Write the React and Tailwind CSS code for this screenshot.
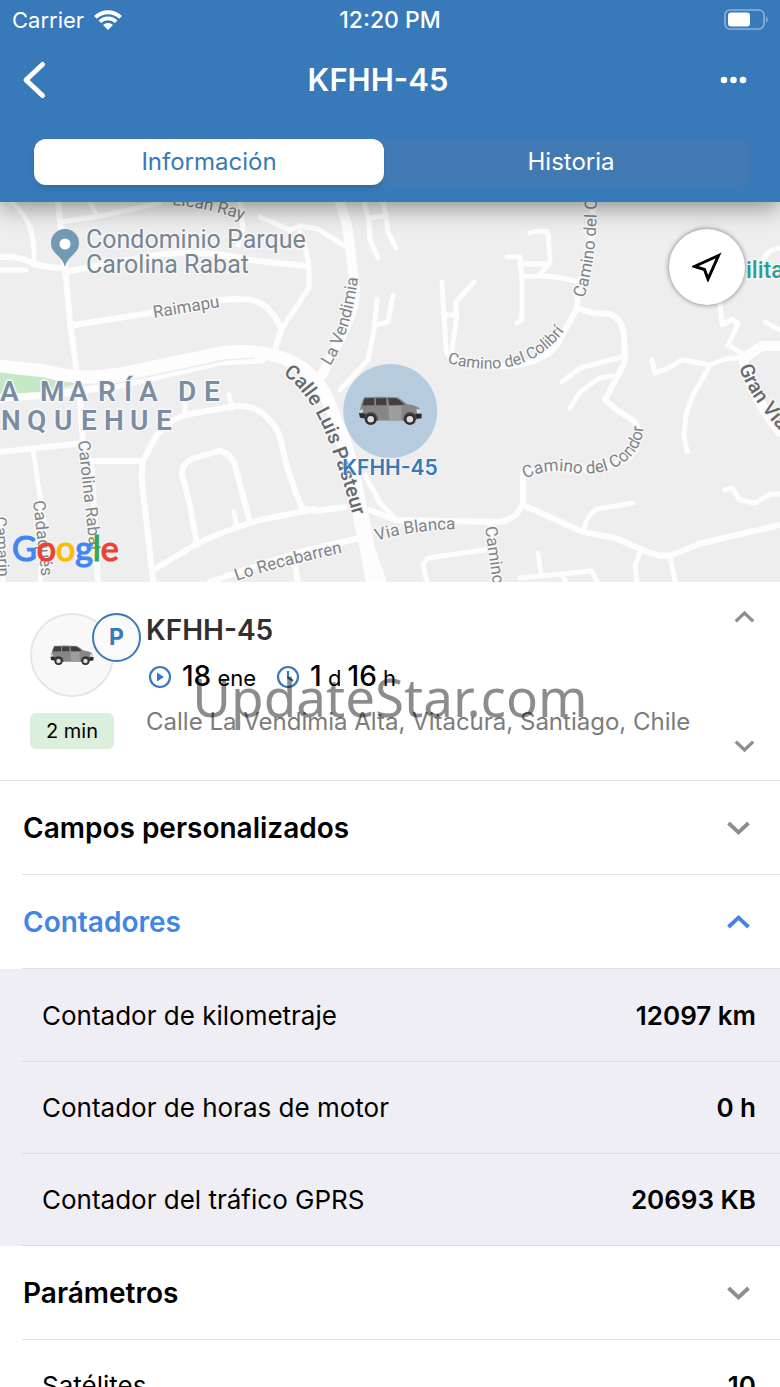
import React from "react";

function Car({ className }) {
  return (
    <svg viewBox="0 0 196 92" className={className} aria-hidden="true">
      <path d="M18 4 Q60 0 118 4 Q128 7 150 25 Q176 28 186 36 L192 54 L190 70 L148 75 L60 75 L8 66 L5 44 L10 22 Z" fill="#868686" />
      <path d="M92 31 H132 V75 H94 Z" fill="#9d9d9d" />
      <path d="M19 7 L49 7 V28 L13 29 Z" fill="#443e3e" />
      <path d="M54 7 H86 V28 H54 Z" fill="#443e3e" />
      <path d="M91 7 H116 Q126 11 141 27 L95 28 Z" fill="#443e3e" />
      <path d="M5 46 L12 38 L14 50 L6 52 Z" fill="#e4e0dc" />
      <path d="M2 52 L24 54 V70 L5 67 Z M170 56 L194 54 V68 L170 70 Z" fill="#2c2c30" />
      <path d="M178 40 L189 41 L191 53 L180 52 Z" fill="#e4e0dc" />
      <path d="M19 72 Q18 49 38 49 Q60 49 61 76 Z M138 76 Q138 49 158 49 Q178 49 178 72 Z" fill="#555" />
      <circle cx="38" cy="71" r="18" fill="#303033" />
      <circle cx="38" cy="71" r="10" fill="#e3dcd5" />
      <circle cx="158" cy="71" r="18" fill="#303033" />
      <circle cx="158" cy="71" r="10" fill="#e3dcd5" />
    </svg>
  );
}

function Chevron({ up = false, className }) {
  return (
    <svg viewBox="0 0 24 16" className={className} fill="none" stroke="currentColor" strokeWidth="3.8" aria-hidden="true">
      <path d={up ? "M2 13 L12 3.5 L22 13" : "M2 3 L12 12.5 L22 3"} />
    </svg>
  );
}

const minorRoads = [
  "M12 202 Q25 215 29 225 Q35 240 34 264",
  "M0 270 H26",
  "M160 203 L100 216 L60 222 M90 202 L97 216",
  "M260 217 L290 230 L300 226 L318 229 L343 245",
  "M240 202 L243 228 L238 245",
  "M300 232 Q308 255 309 268 V288 L281 330 L274 352",
  "M364 202 L369 222 L370 240 L378 258 M383 202 L386 216 L388 232 L396 248 M369 218 L386 216",
  "M377 300 L374 330 L368 360 L340 390 M393 295 L388 322 L375 325",
  "M442 282 L446 350 Q448 360 470 364 M446 315 H457 L452 350 M474 282 L456 302 V316",
  "M530 233 Q535 230 548 232 L550 262 L540 275 M520 264 H549 M507 257 H520 L522 280 V320 L517 323 M522 277 Q550 274 575 281",
  "M625 356 L580 368 L562 382 M612 376 L600 378 L580 392 L570 408",
  "M652 360 L655 373 L668 368 L682 360 L710 365 L725 359 L745 357 M710 365 L693 395 L686 415 L684 435 L687 452",
  "M720 303 L722 325 L732 319 L738 324 L728 345 L745 355 M765 322 L780 330",
  "M725 490 L732 488 L740 500 L755 503 L770 494 H780",
  "M583 531 Q588 513 597 509 L633 503",
  "M520 578 L592 571 L597 582 M538 553 L541 574 M562 574 L566 582",
  "M640 553 L635 565 L637 582 M670 556 L675 582",
  "M485 550 L455 554 L428 558 L423 564 L427 582",
  "M365 475 L380 503 L395 518",
  "M229 395 L232 408 M185 405 V414 M234 512 L237 528",
  "M33 450 L45 530 L40 582 M0 520 L3 582",
  "M780 248 Q768 250 764 258",
];

const localRoads = [
  "M0 257 Q18 255 34 264 Q48 268 65 268",
  "M58 202 L65 268 L70 322 L77 374",
  "M65 272 L150 256 Q200 248 250 260 L306 266",
  "M75 325 L150 313 L215 301 Q250 296 262 304 Q277 314 281 330 L274 352",
  "M0 452 L84 443 M80 400 L83 443 L92 470 L98 582",
  "M84 461 H143 Q140 475 144 500 L153 580",
  "M143 461 L155 438 Q165 422 185 415 L235 406 Q252 405 262 413 Q277 425 281 440 Q286 470 302 508 L315 511 L345 507",
  "M315 509 L260 520 Q220 532 195 545 L153 570",
  "M197 545 L190 505 L182 475 Q181 464 192 459 L218 451 Q231 452 235 466 L250 522",
  "M210 582 L250 568 L300 552 L360 538 M295 565 L298 582",
  "M370 510 L395 520 L500 522 Q516 519 520 508",
  "M523 474 V505 L583 532 L615 538 L645 551 L660 556 L672 555 L702 543 L780 525",
  "M592 202 Q596 245 579 285 L577 308 L592 313 L610 314 Q623 320 624 335 L625 362 L608 394 L605 400 L617 410 L634 421 Q646 440 630 457 Q608 471 570 469 Q540 467 523 475",
  "M577 308 L557 345 Q540 366 500 366 L450 360",
  "M490 522 L497 582",
];

const labels = [
  { id: "ray", d: "M172 205 Q205 207 245 221", text: "Lican Ray", size: 17 },
  { id: "rai", d: "M154 318 L226 306", text: "Raimapu", size: 17 },
  { id: "ven", d: "M330 366 Q352 332 359 270", text: "La Vendimia", size: 17 },
  { id: "cal", d: "M283 374 Q310 393 328 439 Q342 475 357 530", text: "Calle Luis Pasteur", size: 20, weight: 500, color: "#65696e" },
  { id: "col", d: "M447 363 Q528 384 566 328", text: "Camino del Colibrí", size: 16 },
  { id: "cam", d: "M584 298 Q600 250 596 175", text: "Camino del C", size: 17 },
  { id: "con", d: "M525 479 Q548 467 575 473 C615 478 652 454 642 410", text: "Camino del Condor", size: 17 },
  { id: "via", d: "M377 541 Q410 530 462 529", text: "Via Blanca", size: 17 },
  { id: "rec", d: "M237 581 Q275 567 350 551", text: "Lo Recabarren", size: 17 },
  { id: "cor", d: "M78 441 L92 570", text: "Carolina Rabat", size: 17 },
  { id: "cad", d: "M33 501 L43 590", text: "Cadaqués", size: 17 },
  { id: "cmn", d: "M485 527 L498 620", text: "Camino", size: 17 },
  { id: "gra", d: "M739 367 Q750 402 800 452", text: "Gran Vía", size: 20, weight: 500, color: "#65696e" },
  { id: "ole", d: "M-5 517 L0 600", text: "Camarin", size: 16 },
];

const googleLetters = [
  ["G", "#4285f4"], ["o", "#ea4335"], ["o", "#fbbc05"], ["g", "#4285f4"], ["l", "#34a853"], ["e", "#ea4335"],
];

function StreetMap() {
  return (
    <svg viewBox="0 202 780 380" preserveAspectRatio="xMidYMid slice" className="block h-full w-full" role="img" aria-label="Mapa">
      <rect y="202" width="780" height="380" fill="#eeeeee" />
      <path d="M0 371 L70 378 L75 384 L50 391 L0 395 Z" fill="#c5e8c5" />
      <g fill="none" stroke="#fdfdfe" strokeLinejoin="round" strokeLinecap="round">
        <g strokeWidth="5">{minorRoads.map((d) => <path key={d} d={d} />)}</g>
        <g strokeWidth="6">{localRoads.map((d) => <path key={d} d={d} />)}</g>
        <path d="M340 202 L347 225 L351 255 L355 290 Q356 305 342 335 L322 375" strokeWidth="10" />
        <path d="M0 366 L45 371 Q80 381 120 374 L220 353 Q262 348 290 361 Q315 373 328 400 Q342 435 350 470 L362 530 L380 582" strokeWidth="13" />
        <path d="M0 398 L50 395 L120 385 L220 362 L262 360" strokeWidth="7" />
        <path d="M340 430 L352 470 L364 530 L374 586" strokeWidth="15" />
        <path d="M745 357 L762 346 H780 M743 357 Q750 395 780 432" strokeWidth="10" />
      </g>
      <path d="M100 387 L165 373 L225 360 L255 358" fill="none" stroke="#ececee" strokeWidth="1.5" />
      <g fontFamily="Roboto, sans-serif" paintOrder="stroke" stroke="#f7f7f7" strokeWidth="3" strokeLinejoin="round">
        {labels.map((l) => (
          <g key={l.id}>
            <path id={l.id} d={l.d} fill="none" stroke="none" />
            <text fontSize={l.size} fontWeight={l.weight || 400} fill={l.color || "#808387"}>
              <textPath href={"#" + l.id}>{l.text}</textPath>
            </text>
          </g>
        ))}
        <g fontSize="25" fill="#768592">
          <text x="86" y="248">Condominio Parque</text>
          <text x="86" y="273">Carolina Rabat</text>
        </g>
        <g fontSize="28" fontWeight="600" fill="#7b8da3">
          {["A", "M", "A", "R", "Í", "A", "D", "E"].map((c, i) => (
            <text key={i} x={[0, 40, 69, 98, 124, 139, 178, 204][i]} y="401">{c}</text>
          ))}
          {["N", "Q", "U", "E", "H", "U", "E"].map((c, i) => (
            <text key={i} x={[1, 27, 54, 81, 104, 130, 156][i]} y="430">{c}</text>
          ))}
        </g>
        <text x="746" y="278" fontSize="23" fontWeight="500" fill="#2f9c95">ilita</text>
      </g>
      <path d="M65 267 C62 255 51 254 51 243 A14 14 0 0 1 79 243 C79 254 68 255 65 267 Z" fill="#739ab3" />
      <circle cx="65" cy="244" r="5.5" fill="#fff" />
      <text x="12" y="561" fontFamily="Lato, sans-serif" fontSize="34" fontWeight="400" strokeWidth="1.2">
        {googleLetters.map(([c, color], i) => <tspan key={i} fill={color} stroke={color}>{c}</tspan>)}
      </text>
    </svg>
  );
}

function Header() {
  return (
    <header className="relative z-10 bg-[#3779b9] pb-4 text-white shadow-[0_4px_24px_rgba(0,0,0,0.45)]">
      <div className="grid h-10 grid-cols-3 items-center px-3 text-[22px]">
        <div className="flex items-center gap-[10px]">
          <span>Carrier</span>
          <svg viewBox="0 0 28 22" className="h-[22px] w-7" fill="none" stroke="#fff" aria-hidden="true">
            <path d="M1.400 8.400 A17.800 17.800 0 0 1 26.600 8.400" strokeWidth="4" />
            <path d="M5.800 12.800 A11.600 11.600 0 0 1 22.200 12.800" strokeWidth="3.600" />
            <path d="M9 16 A7 7 0 0 1 19 16 L14 21 Z" fill="#fff" stroke="none" />
          </svg>
        </div>
        <span className="text-center text-[23px] font-medium">12:20 PM</span>
        <svg viewBox="0 0 46 22" className="h-[22px] w-[46px] justify-self-end" aria-hidden="true">
          <rect x="3" y="1" width="39" height="19" rx="5" fill="none" stroke="#8db4d9" strokeWidth="1.6" />
          <rect x="6" y="3.500" width="22" height="14" rx="3" fill="#fff" />
          <path d="M44 7 Q47.500 10.500 44 14 Z" fill="#8db4d9" />
        </svg>
      </div>
      <div className="grid h-20 grid-cols-[1fr_auto_1fr] items-center px-5">
        <button type="button" aria-label="Volver" className="justify-self-start">
          <svg viewBox="0 0 28 40" className="h-10 w-7" fill="none" stroke="#fff" strokeWidth="5" strokeLinecap="round" strokeLinejoin="round" aria-hidden="true">
            <path d="M22.500 4.500 L6 20 L22.500 35.500" />
          </svg>
        </button>
        <h1 className="pr-6 text-[31px] font-semibold">KFHH-45</h1>
        <button type="button" aria-label="Más opciones" className="justify-self-end pr-3">
          <svg viewBox="0 0 28 8" className="h-2 w-7" fill="#fff" aria-hidden="true">
            <circle cx="4" cy="4" r="3.300" /><circle cx="13.500" cy="4" r="3.300" /><circle cx="23" cy="4" r="3.300" />
          </svg>
        </button>
      </div>
      <div role="tablist" className="mt-[18px] mr-[30px] ml-[34px] grid grid-cols-2 rounded-xl bg-[#417ab2] py-px text-2xl">
        <button type="button" role="tab" aria-selected="true" className="mr-2 h-[46px] rounded-xl bg-white text-[#3779b9] shadow-md">Información</button>
        <button type="button" role="tab" aria-selected="false" className="h-[46px]">Historia</button>
      </div>
    </header>
  );
}

function MapPanel() {
  return (
    <section className="relative h-[380px] shrink-0 overflow-hidden">
      <StreetMap />
      <div className="absolute top-[162px] left-1/2 flex -translate-x-1/2 flex-col items-center">
        <div className="flex size-[94px] items-center justify-center rounded-full bg-[#3779b9]/30">
          <Car className="w-16" />
        </div>
        <span className="text-[21px] leading-5 font-semibold text-[#3779b9] [text-shadow:0_0_2px_#fff,0_0_2px_#fff]">KFHH-45</span>
      </div>
      <button type="button" aria-label="Centrar" className="absolute top-[27px] right-[35px] flex size-[76px] items-center justify-center rounded-full bg-white shadow-[0_0_5px_rgba(0,0,0,0.5)]">
        <svg viewBox="0 0 30 30" className="size-[30px]" fill="none" stroke="#000" strokeWidth="3" aria-hidden="true">
          <path d="M26.500 3.500 L2.500 14.500 L12.500 17.500 L16 27 Z" />
        </svg>
      </button>
    </section>
  );
}

function Vehicle() {
  return (
    <section className="relative flex border-b border-[#e2e2e4] pt-[30px] pr-6 pb-[31px] pl-[30px]">
      <div className="flex w-[116px] shrink-0 flex-col items-start gap-4 pt-px">
        <div className="relative flex size-[84px] items-center justify-center rounded-full border-2 border-[#e6e6e6] bg-[#f8f8f8]">
          <Car className="w-[44px]" />
          <span className="absolute -top-[2px] -right-[29px] flex size-[49px] items-center justify-center rounded-full border-2 border-[#3779b9] bg-[#fafafa] text-[23px] font-bold text-[#3779b9]">P</span>
        </div>
        <span className="rounded-md bg-[#dbefdc] px-4 py-1 text-xl leading-7">2 min</span>
      </div>
      <div className="min-w-0 flex-1">
        <h2 className="text-[28px] leading-9 font-semibold text-[#303030]">KFHH-45</h2>
        <div className="mt-2 flex items-center pl-[2px] leading-10">
          <svg viewBox="0 0 24 24" className="mr-[10px] size-6" fill="none" stroke="#3779b9" strokeWidth="2.200" aria-hidden="true">
            <circle cx="12" cy="12" r="10" /><path d="M9 7.500 L16 12 L9 16.500 Z" fill="#3779b9" stroke="none" />
          </svg>
          <span className="text-[22px]"><b className="text-[28px] font-medium">18</b> ene</span>
          <svg viewBox="0 0 24 24" className="mr-[10px] ml-5 size-6" fill="none" stroke="#3779b9" strokeWidth="2.200" aria-hidden="true">
            <circle cx="12" cy="12" r="10" /><path d="M12 6 V12.500 L17 16" />
          </svg>
          <span className="text-[22px]"><b className="text-[28px] font-medium">1</b> d <b className="text-[28px] font-medium">16</b> h</span>
        </div>
        <p className="mt-2 text-2xl leading-8 whitespace-nowrap text-[#7c7c7c]">Calle La Vendimia Alta, Vitacura, Santiago, Chile</p>
      </div>
      <div className="-mt-[2px] -mb-1 flex flex-col justify-between">
        <button type="button" aria-label="Anterior" className="w-6 text-[#8e8e8e]"><Chevron up className="mx-auto h-[14px] w-[21px]" /></button>
        <button type="button" aria-label="Siguiente" className="w-6 text-[#8e8e8e]"><Chevron className="mx-auto h-[14px] w-[21px]" /></button>
      </div>
      <div className="pointer-events-none absolute inset-x-0 top-[80px] text-center font-['Noto_Sans',sans-serif] text-[53px] leading-[70px] text-black/45">UpdateStar.com</div>
    </section>
  );
}

function SectionHeader({ title, open = false }) {
  return (
    <h2 className="ml-[22px] border-b border-[#e2e2e4]">
      <button type="button" aria-expanded={open} className={"flex h-[93px] w-full items-center justify-between pr-[29px] pl-[1px] text-[28px] font-semibold " + (open ? "text-[#4285e8]" : "text-black")}>
        {title}
        <Chevron up={open} className={"h-4 w-[25px] " + (open ? "" : "text-[#8e8e8e]")} />
      </button>
    </h2>
  );
}

function Row({ label, value }) {
  return (
    <div className="ml-[22px] flex h-[92px] items-center justify-between border-b border-[#dcdce0] pr-6 pl-5 text-[26px]">
      <dt>{label}</dt>
      <dd className="font-semibold">{value}</dd>
    </div>
  );
}

export default function App() {
  return (
    <div className="flex h-screen flex-col overflow-hidden bg-white font-['Inter',sans-serif] text-black">
      <Header />
      <main className="min-h-0 flex-1 overflow-y-auto [scrollbar-width:none]">
        <MapPanel />
        <Vehicle />
        <SectionHeader title="Campos personalizados" />
        <SectionHeader title="Contadores" open />
        <dl className="bg-[#efeef4] pt-px">
          <Row label="Contador de kilometraje" value="12097 km" />
          <Row label="Contador de horas de motor" value="0 h" />
          <Row label="Contador del tráfico GPRS" value="20693 KB" />
        </dl>
        <SectionHeader title="Parámetros" />
        <dl>
          <Row label="Satélites" value="10" />
        </dl>
      </main>
    </div>
  );
}
